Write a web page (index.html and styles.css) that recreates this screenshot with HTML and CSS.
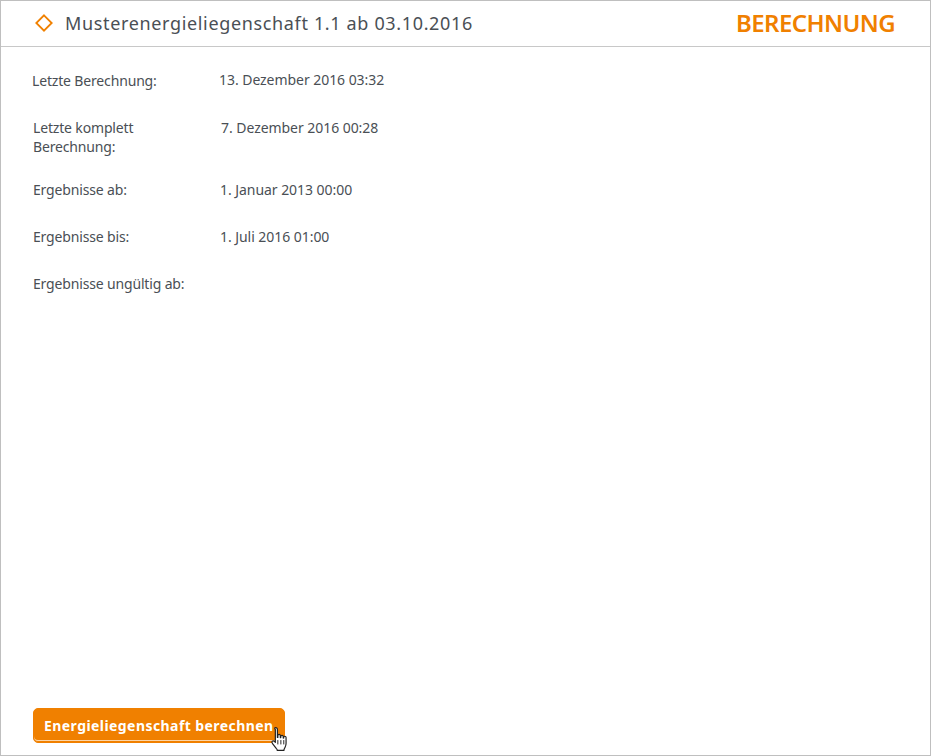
FILE: index.html
```html
<!DOCTYPE html>
<html lang="de">
<head>
<meta charset="utf-8">
<title>Berechnung</title>
<link rel="stylesheet" href="styles.css">
</head>
<body>
<div class="frame">
  <header class="header">
    <div class="heading">
      <svg class="diamond" width="18" height="18" viewBox="0 0 18 18" aria-hidden="true"><path d="M9 1.300 16.700 9 9 16.700 1.300 9Z" fill="none" stroke="#f08000" stroke-width="1.800"/></svg>
      <h1 class="title">Musterenergieliegenschaft 1.1 ab 03.10.2016</h1>
    </div>
    <div class="section">BERECHNUNG</div>
  </header>
  <main class="content">
    <div class="info">
      <div class="row row-first"><div class="label">Letzte Berechnung:</div><div class="value">13. Dezember 2016 03:32</div></div>
      <div class="row row-second"><div class="label">Letzte komplett<br>Berechnung:</div><div class="value">7. Dezember 2016 00:28</div></div>
      <div class="row row-third"><div class="label">Ergebnisse ab:</div><div class="value">1. Januar 2013 00:00</div></div>
      <div class="row row-fourth"><div class="label">Ergebnisse bis:</div><div class="value">1. Juli 2016 01:00</div></div>
      <div class="row row-fifth"><div class="label">Ergebnisse ungültig ab:</div><div class="value"></div></div>
    </div>
    <div class="actions">
      <button class="button" type="button">Energieliegenschaft berechnen</button>
      <svg class="cursor" width="20" height="26" viewBox="0 0 18 24" aria-hidden="true"><path d="M5 1.500c1 0 1.600.7 1.600 1.700v7.400l.4-.1V8.900c0-1.500 2.300-1.500 2.300 0v1.800l.4.100V9.700c0-1.500 2.300-1.500 2.300 0v1.400l.4.100v-.7c0-1.400 2.200-1.400 2.200 0v5.500c0 1.500-.3 2.500-.9 3.600l-.7 1.400c-.3.600-.4.900-.4 1.500H6.500c0-.8-.4-1.200-1-1.800l-3.400-4.400c-.7-.9-.8-1.700-.2-2.300.7-.6 1.500-.4 2.200.3l.6.700V3.200C3.700 2.200 4.100 1.500 5 1.500Z" fill="#fff" stroke="#222" stroke-width="1.100" stroke-linejoin="round"/><path d="M7 13v4M9.800 13v4M12.500 13v4" stroke="#222" stroke-width=".9" fill="none"/></svg>
    </div>
  </main>
</div>
</body>
</html>
```

FILE: styles.css
```css
* { box-sizing: border-box; }
html, body { margin: 0; height: 100%; background: #fff; }
body { font-family: "Noto Sans", "Liberation Sans", sans-serif; color: #4a4f55; }
.frame {
  width: 931px;
  height: 756px;
  border: 1px solid #bfbfbf;
  display: flex;
  flex-direction: column;
}
.header {
  height: 46px;
  flex: none;
  border-bottom: 1px solid #c8c8c8;
  display: flex;
  align-items: center;
  justify-content: space-between;
  padding: 0 35px 0 34px;
}
.heading { display: flex; align-items: center; gap: 12px; }
.diamond { display: block; margin-top: -2px; }
.title {
  margin: 0;
  font-size: 18px;
  font-weight: 400;
  letter-spacing: 0.65px;
  line-height: 24px;
  margin-top: -1px;
}
.section {
  font-size: 24px;
  font-weight: 600;
  letter-spacing: -0.6px;
  color: #f08000;
  line-height: 30px;
  margin-top: -1px;
}
.content { flex: 1; display: flex; flex-direction: column; justify-content: space-between; padding: 0 31px 12px; }
.info { font-size: 14px; line-height: 19px; }
.row { display: grid; grid-template-columns: 188px 1fr; }
.row-first { padding-top: 24px; }
.row-first .value { margin-top: -1px; margin-left: -1px; }
.row-second { padding-top: 28px; padding-left: 1px; }
.row-third { padding-top: 24px; padding-left: 1px; }
.row-third .value, .row-fourth .value { margin-left: -1px; }
.row-fourth { padding-top: 28px; padding-left: 1px; }
.row-fifth { padding-top: 28px; padding-left: 1px; }
.label { letter-spacing: -0.16px; }
.value { letter-spacing: -0.05px; }
.actions { position: relative; width: 253px; margin-left: 1px; }
.button {
  display: block;
  width: 252px;
  height: 35px;
  border: 1px solid #f08000;
  border-radius: 5px;
  background: #f08000;
  box-shadow: inset 0 -1px 0 #f08000, inset 0 -2px 0 #fbd5a8;
  color: #fff;
  font-family: "Noto Sans", "Liberation Sans", sans-serif;
  font-size: 14px;
  font-weight: 700;
  letter-spacing: 0.43px;
  text-align: left;
  padding: 0 0 1px 10px;
}
.cursor { position: absolute; left: 237px; top: 18px; }
```
